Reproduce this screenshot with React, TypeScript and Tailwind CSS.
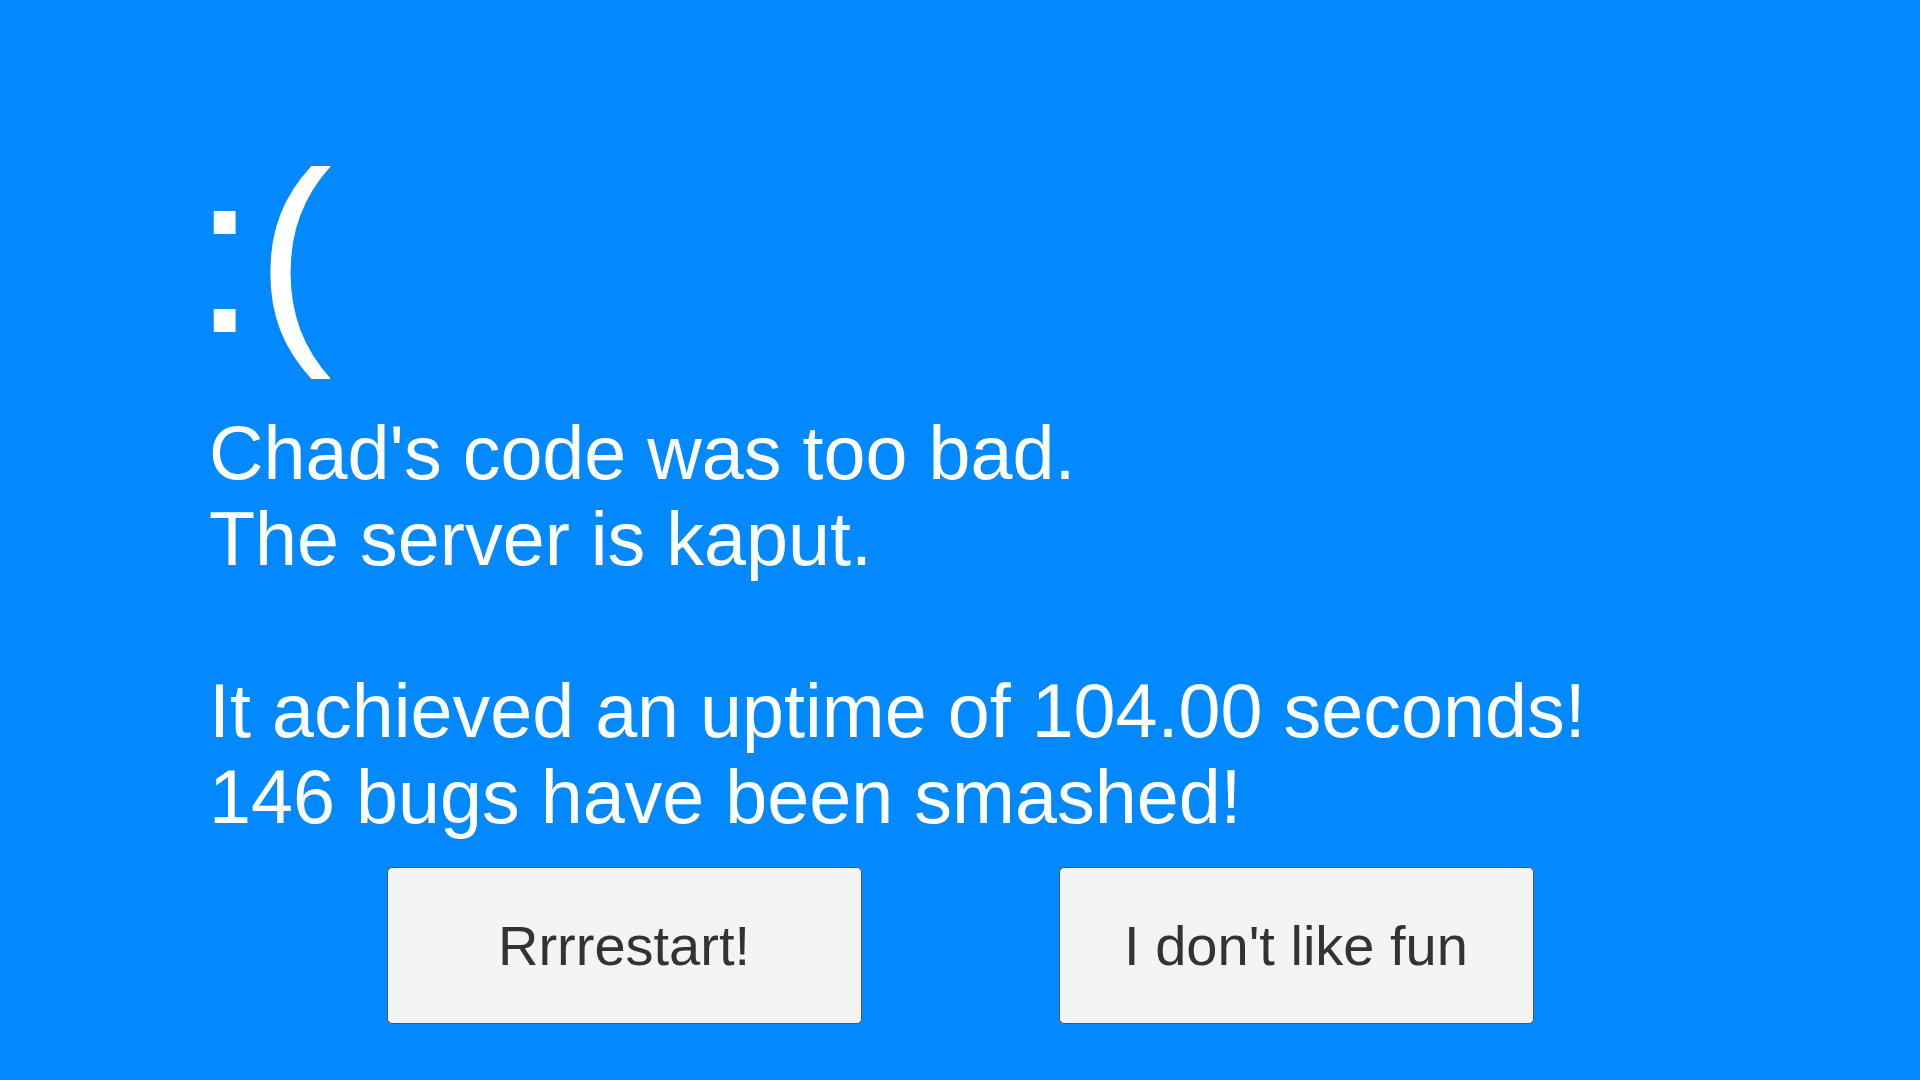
import React from 'react';

const uptime = 104.0;
const bugs = 146;

export default function App() {
    return (
        <div className="w-[1920px] h-[1080px] overflow-hidden bg-[#0389ff] text-white font-['Liberation_Sans',Arial,sans-serif]">
            {/* sad face */}
            <div className="pt-[139px] pl-[193px] text-[228px] leading-none">:(</div>

            {/* crash message */}
            <div className="mt-[43px] pl-[209px] text-[75.5px] leading-[86px]">
                <p>Chad's code was too bad.</p>
                <p>The server is kaput.</p>
                <br />
                <p>It achieved an uptime of {uptime.toFixed(2)} seconds!</p>
                <p>{bugs} bugs have been smashed!</p>
            </div>

            {/* actions */}
            <div className="mt-[27px] flex justify-center gap-[197px]">
                <button className="w-[475px] h-[157px] rounded-[5px] border border-[#555] bg-[#f4f4f4] text-[56px] text-[#333]">
                    Rrrrestart!
                </button>
                <button className="w-[475px] h-[157px] rounded-[5px] border border-[#555] bg-[#f4f4f4] text-[56px] text-[#333]">
                    I don't like fun
                </button>
            </div>
        </div>
    );
}
